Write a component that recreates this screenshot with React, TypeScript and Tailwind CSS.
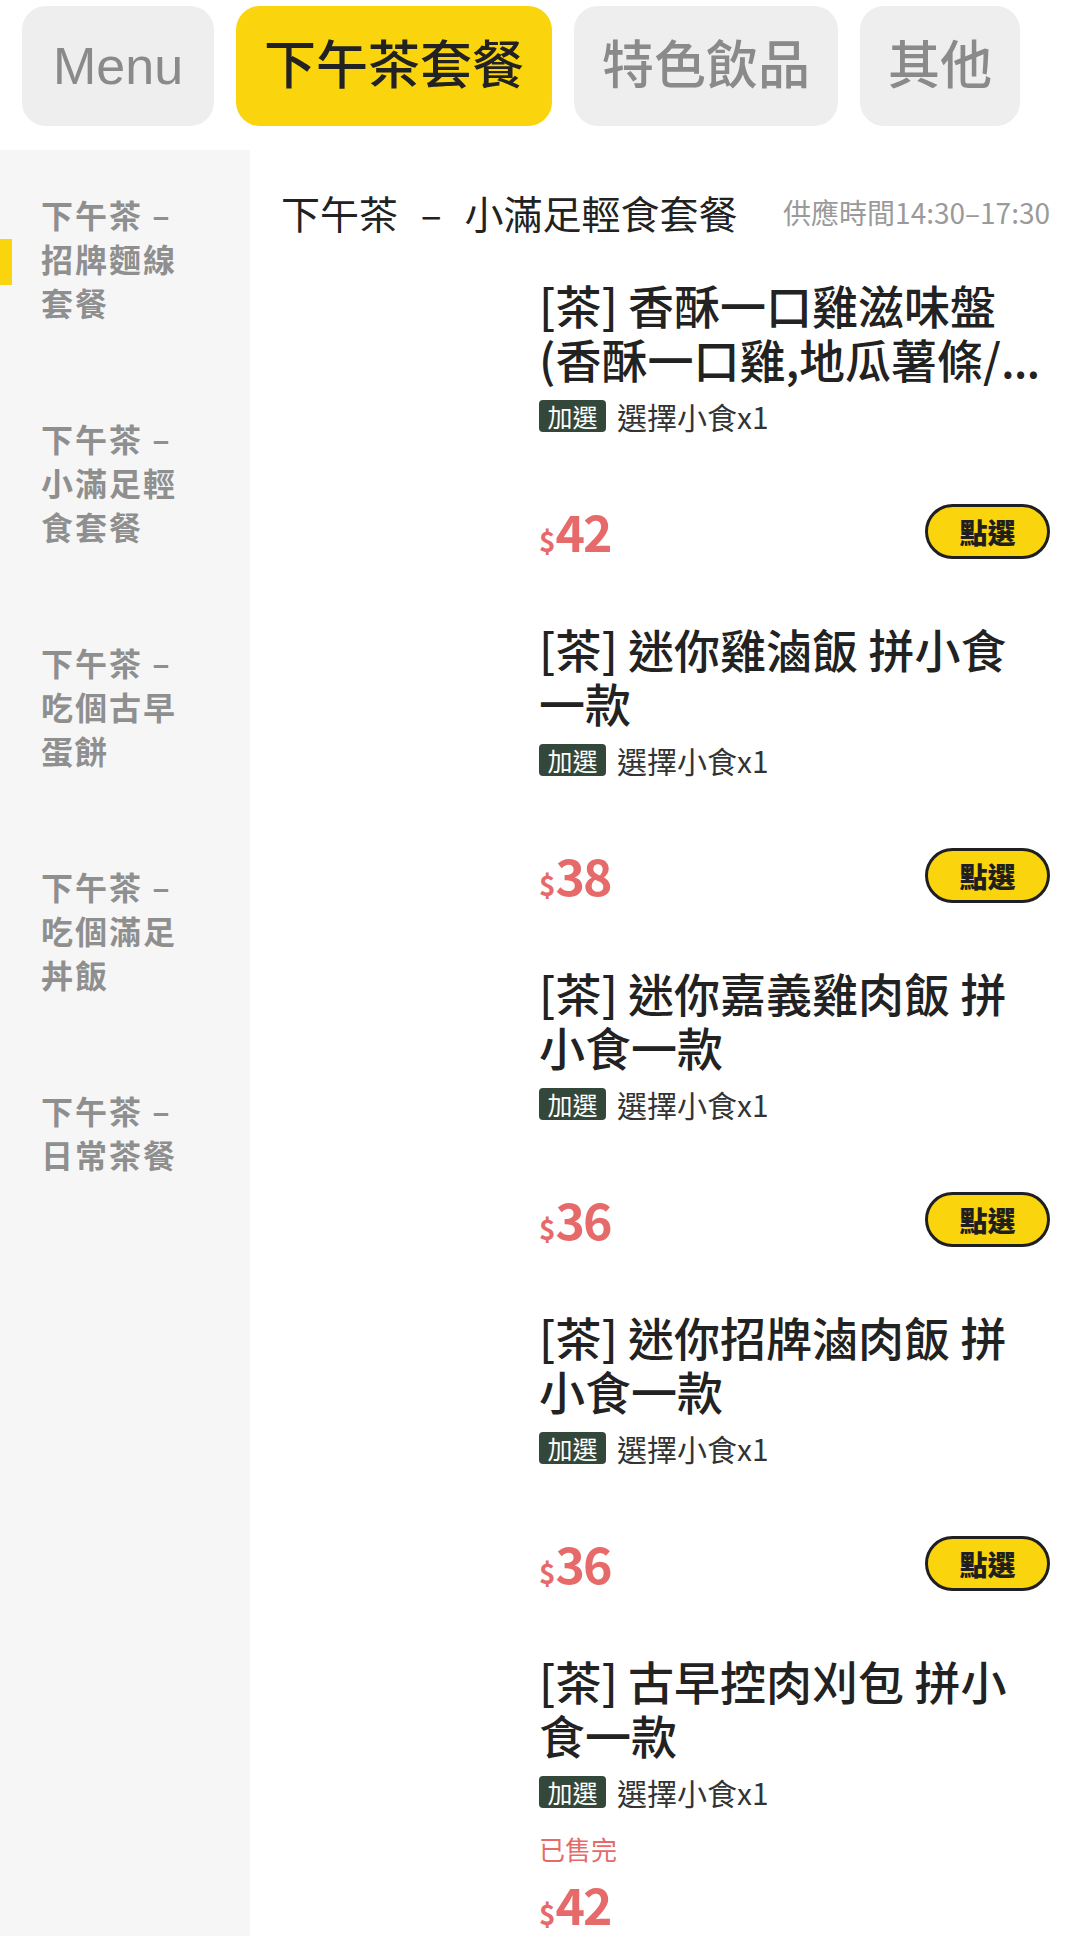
const cjk = '"Noto Sans CJK TC", "Noto Sans CJK SC", sans-serif';

const tabs = [
  { label: 'Menu', active: false },
  { label: '下午茶套餐', active: true },
  { label: '特色飲品', active: false },
  { label: '其他', active: false },
];

const categories = [
  { name: '下午茶 – 招牌麵線套餐', active: true },
  { name: '下午茶 – 小滿足輕食套餐', active: false },
  { name: '下午茶 – 吃個古早蛋餅', active: false },
  { name: '下午茶 – 吃個滿足丼飯', active: false },
  { name: '下午茶 – 日常茶餐', active: false },
];

const items = [
  { title: '[茶] 香酥一口雞滋味盤(香酥一口雞,地瓜薯條/', more: true, price: 42, soldOut: false },
  { title: '[茶] 迷你雞滷飯 拼小食一款', more: false, price: 38, soldOut: false },
  { title: '[茶] 迷你嘉義雞肉飯 拼小食一款', more: false, price: 36, soldOut: false },
  { title: '[茶] 迷你招牌滷肉飯 拼小食一款', more: false, price: 36, soldOut: false },
  { title: '[茶] 古早控肉刈包 拼小食一款', more: false, price: 42, soldOut: true },
];

function Price({ value }: { value: number }) {
  return (
    <div className="flex items-baseline text-[#e66a69] font-semibold">
      <span className="text-[28px]">$</span>
      <span className="text-[50px] leading-[55px] tracking-[-2px]">{value}</span>
    </div>
  );
}

type Item = { title: string; more: boolean; price: number; soldOut: boolean };

function MenuItem({ title, more, price, soldOut }: Item) {
  return (
    <div className="flex flex-col">
      <h3 className="text-[46px] leading-[54px] font-medium text-[#222]">
        {title}
        {more && <span className="tracking-[-1px]">...</span>}
      </h3>

      {/* 加選 */}
      <div className="mt-[15px] flex h-[32px] items-center gap-[11px]">
        <span className="flex h-[32px] w-[67px] items-center justify-center rounded-[4px] bg-[#34473b] text-[25px] leading-none text-white">
          加選
        </span>
        <span className="text-[30px] leading-none text-[#333]">選擇小食x1</span>
      </div>

      {soldOut ? (
        <>
          <p className="mt-[24px] text-[26px] leading-[34px] text-[#e66a69]">已售完</p>
          <div className="mt-[11px] flex h-[55px] items-center">
            <Price value={price} />
          </div>
        </>
      ) : (
        <div className="mt-[72px] flex h-[55px] items-center justify-between">
          <Price value={price} />
          <button className="h-[55px] w-[125px] rounded-full border-[3px] border-[#1f1f1f] bg-[#fad40c] text-[28px] font-black text-[#1f1f1f]">
            點選
          </button>
        </div>
      )}
    </div>
  );
}

export default function App() {
  return (
    <div className="flex h-[1936px] w-[1080px] flex-col overflow-hidden bg-white" style={{ fontFamily: cjk }}>
      {/* 分類 tabs */}
      <div className="flex shrink-0 gap-[22px] px-[22px] pt-[6px] pb-[24px]">
        {tabs.map((t) => (
          <div
            key={t.label}
            className={
              t.active
                ? 'flex h-[120px] items-center rounded-[24px] bg-[#fad40c] px-[28px] text-[52px] font-medium text-[#222]'
                : t.label === 'Menu'
                  ? 'flex h-[120px] items-center rounded-[24px] bg-[#eeeeee] px-[31px] text-[52px] font-medium text-[#8a8a8a]'
                  : 'flex h-[120px] items-center rounded-[24px] bg-[#eeeeee] px-[28px] text-[52px] font-medium text-[#8a8a8a]'
            }
            style={{ fontFamily: '"Liberation Sans", "Noto Sans CJK TC", sans-serif' }}
          >
            {t.label}
          </div>
        ))}
      </div>

      <div className="flex flex-1">
        {/* 左側選單 */}
        <div className="w-[250px] shrink-0 bg-[#f6f6f6]">
          {categories.map((c) => (
            <div key={c.name} className="relative pt-[42px] pb-[50px] pl-[41px]">
              {c.active && (
                <span className="absolute left-0 top-1/2 h-[46px] w-[12px] -translate-y-1/2 bg-[#fad40c]" />
              )}
              <p className="w-[150px] text-[32px] font-bold leading-[44px] tracking-[2px] text-[#8f8f8f]">{c.name}</p>
            </div>
          ))}
        </div>

        {/* 右側內容 */}
        <div className="flex-1 pl-[31px] pr-[30px] pt-[37px]">
          <div className="flex h-[50px] items-center justify-between">
            <h2 className="text-[39px] text-[#222] [word-spacing:14px]">下午茶 – 小滿足輕食套餐</h2>
            <span className="text-[28px] text-[#9a9a9a]">供應時間14:30–17:30</span>
          </div>

          <div className="ml-[258px] mt-[40px] flex flex-col gap-[62px]">
            {items.map((it) => (
              <MenuItem key={it.title} {...it} />
            ))}
          </div>
        </div>
      </div>
    </div>
  );
}
